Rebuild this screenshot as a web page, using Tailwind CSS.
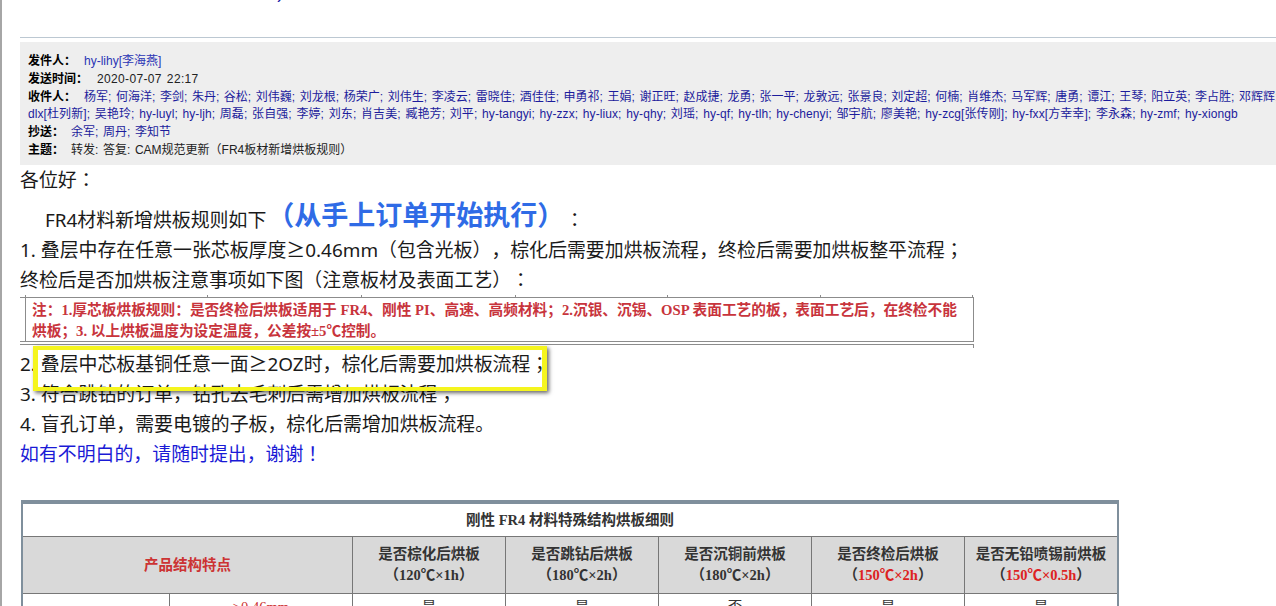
<!DOCTYPE html>
<html lang="zh-CN">
<head>
  <meta charset="UTF-8" />
  <title>转发: 答复: CAM规范更新</title>
  <script src="https://cdn.jsdelivr.net/npm/@tailwindcss/browser@4"></script>
</head>
<body class="h-[606px] w-[1276px] overflow-hidden bg-white font-['Liberation_Sans','Noto_Sans_CJK_SC',sans-serif] [text-spacing-trim:space-all]">
  <div class="relative h-[606px] border-l-2 border-[#a6a6a6] pl-[18px]">
    <!-- cut off line at the top of the scroll area -->
    <div class="h-[37px] overflow-hidden pl-[60px] text-[18.67px] leading-[30px] text-[#1a1aa8]">
      <div class="-mt-[23px]">征拔<span class="ml-[160px]">)</span></div>
    </div>
    <div class="h-px bg-[#bcc8d2]"></div>

    <!-- mail header -->
    <div class="mt-1 h-[123px] overflow-hidden whitespace-nowrap bg-[#eeeeee] pl-2 pt-[11px] text-[12px] leading-[17.8px] text-[#222222] [word-spacing:1.3px]">
      <div><b class="inline-block w-[56px] text-black">发件人：</b><span class="text-[#2b35b5]">hy-lihy[李海燕]</span></div>
      <div><b class="inline-block w-[69px] text-black">发送时间：</b><span class="tracking-[0.35px]">2020-07-07 22:17</span></div>
      <div><b class="inline-block w-[56px] text-black">收件人：</b><span class="text-[#1c1c9c]">杨军; 何海洋; 李剑; 朱丹; 谷松; 刘伟巍; 刘龙根; 杨荣广; 刘伟生; 李凌云; 雷晓佳; 酒佳佳; 申勇祁; 王娟; 谢正旺; 赵成捷; 龙勇; 张一平; 龙敦远; 张景良; 刘定超; 何楠; 肖维杰; 马军辉; 唐勇; 谭江; 王琴; 阳立英; 李占胜; 邓辉辉;</span></div>
      <div class="tracking-[0.08px] text-[#1c1c9c]">dlx[杜列新]; 吴艳玲; hy-luyl; hy-ljh; 周磊; 张自强; 李婷; 刘东; 肖吉美; 臧艳芳; 刘平; hy-tangyi; hy-zzx; hy-liux; hy-qhy; 刘瑶; hy-qf; hy-tlh; hy-chenyi; 邹宇航; 廖美艳; hy-zcg[张传刚]; hy-fxx[方幸幸]; 李永森; hy-zmf; hy-xiongb</div>
      <div><b class="inline-block w-[43px] text-black">抄送：</b><span class="text-[#1c1c9c]">余军; 周丹; 李知节</span></div>
      <div><b class="inline-block w-[43px] text-black">主题：</b>转发: 答复: CAM规范更新（FR4板材新增烘板规则）</div>
    </div>

    <!-- mail body -->
    <div lang="ko" class="whitespace-nowrap font-['Noto_Sans','Noto_Sans_CJK_KR',sans-serif] text-[18.9px] leading-[30px] text-[#1a1a1a]">
      <p class="h-[30px]">各位好：</p>
      <p class="flex h-[40px] items-end pl-[25px]">FR4材料新增烘板规则如下<span class="mx-[1px] text-[27px] font-bold leading-[40px] text-[#2f6be6]">（从手上订单开始执行）</span>：</p>
      <p>1. 叠层中存在任意一张芯板厚度≥0.46mm（包含光板），棕化后需要加烘板流程，终检后需要加烘板整平流程；</p>
      <p>终检后是否加烘板注意事项如下图（注意板材及表面工艺）：</p>

      <!-- pasted note image -->
      <div class="h-[53px] w-[954px]">
        <div class="flex h-[2px] pl-[5px]">
          <div class="w-[182px] border-l border-[#8c8c8c]"></div>
          <div class="w-[154px] border-l border-[#8c8c8c]"></div>
          <div class="w-[154px] border-l border-[#8c8c8c]"></div>
          <div class="w-[152px] border-l border-[#8c8c8c]"></div>
          <div class="w-[153px] border-l border-[#8c8c8c]"></div>
          <div class="w-[153px] border-x border-[#8c8c8c]"></div>
        </div>
        <div class="border-y border-[#8c8c8c] bg-white">
          <div lang="zh-CN" class="ml-[5px] h-[43px] border-x border-[#8c8c8c] pl-[6px] pt-[2px] font-['Liberation_Serif','Noto_Sans_CJK_SC',serif] text-[14.7px] font-bold leading-[21px] text-[#c8343c]">
            <div>注：1.厚芯板烘板规则：是否终检后烘板适用于 FR4、刚性 PI、高速、高频材料；2.沉银、沉锡、OSP 表面工艺的板，表面工艺后，在终检不能</div>
            <div>烘板；3. 以上烘板温度为设定温度，公差按±5℃控制。</div>
          </div>
        </div>
        <div class="h-[3px] border-b border-[#8c8c8c]"></div>
        <div class="ml-[953px] h-[3px] border-l border-[#8c8c8c]"></div>
      </div>

      <div class="pt-[1px]">
        <p>2. 叠层中芯板基铜任意一面≥2OZ时，棕化后需要加烘板流程；</p>
        <p>3. 符合跳钻的订单，钻孔去毛刺后需增加烘板流程；</p>
        <p>4. 盲孔订单，需要电镀的子板，棕化后需增加烘板流程。</p>
        <p class="text-[#1a1ad6]">如有不明白的，请随时提出，谢谢！</p>
      </div>
    </div>

    <!-- pasted rule table image -->
    <div class="ml-[1px] mt-[31px] w-[1098px] border-2 border-b-0 border-t-4 border-[#7f8f9c] font-['Liberation_Serif','Noto_Sans_CJK_SC',serif] text-[14.5px] font-semibold text-[#333333]">
      <div class="h-[32px] text-center leading-[32px]">刚性 FR4 材料特殊结构烘板细则</div>
      <div class="grid h-[58px] grid-cols-[329px_153px_153px_153px_153px_1fr] border-y border-[#777777] bg-[#d9d9d9] text-center leading-[21px]">
        <div class="flex items-center justify-center text-[#cc3333]">产品结构特点</div>
        <div class="border-l border-[#777777] pt-[7px]">是否棕化后烘板<br />（120℃×1h）</div>
        <div class="border-l border-[#777777] pt-[7px]">是否跳钻后烘板<br />（180℃×2h）</div>
        <div class="border-l border-[#777777] pt-[7px]">是否沉铜前烘板<br />（180℃×2h）</div>
        <div class="border-l border-[#777777] pt-[7px]">是否终检后烘板<br />（<span class="text-[#dd2222]">150℃×2h</span>）</div>
        <div class="border-l border-[#777777] pt-[7px]">是否无铅喷锡前烘板<br />（<span class="text-[#dd2222]">150℃×0.5h</span>）</div>
      </div>
      <div class="grid h-[30px] grid-cols-[146px_183px_153px_153px_153px_153px_1fr] text-center font-normal leading-[26px]">
        <div></div>
        <div class="border-l border-[#777777] text-[#cc3333]">≥0.46mm</div>
        <div class="border-l border-[#777777]">是</div>
        <div class="border-l border-[#777777]">是</div>
        <div class="border-l border-[#777777]">否</div>
        <div class="border-l border-[#777777]">是</div>
        <div class="border-l border-[#777777]">是</div>
      </div>
    </div>

    <!-- yellow highlight over the second rule -->
    <div class="absolute left-[31px] top-[346px] h-[45px] w-[514px] border-x-[5px] border-y-4 border-[#f5f51e] shadow-[2px_2px_4px_rgba(0,0,0,0.6)]"></div>
  </div>
</body>
</html>
